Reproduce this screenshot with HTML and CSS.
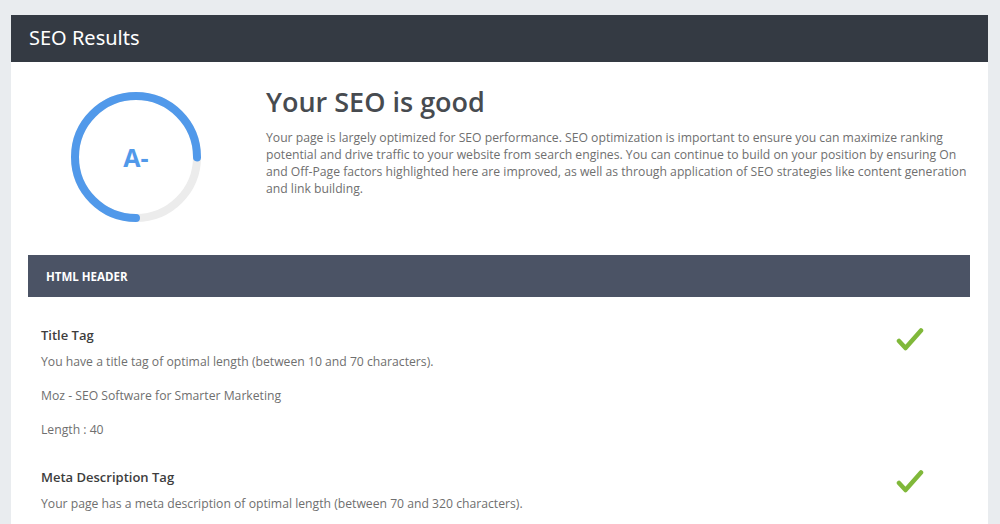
FILE: index.html
```html
<!DOCTYPE html>
<html>
<head>
<meta charset="utf-8">
<link rel="stylesheet" href="styles.css">
</head>
<body>
<div class="card">
  <div class="card-header">SEO Results</div>
  <div class="card-body">
    <div class="hero">
      <div class="gauge">
        <svg width="130" height="130" viewBox="0 0 130 130">
          <circle cx="65" cy="65" r="61" fill="none" stroke="#ececec" stroke-width="8"/>
          <circle cx="65" cy="65" r="61" fill="none" stroke="#5199ea" stroke-width="8" stroke-linecap="round"
            stroke-dasharray="287.4 383.3" transform="rotate(90 65 65)"/>
        </svg>
        <span class="grade">A-</span>
      </div>
      <div class="hero-text">
        <h1 class="hero-title">Your SEO is good</h1>
        <p class="hero-desc">Your page is largely optimized for SEO performance. SEO optimization is important to ensure you can maximize ranking potential and drive traffic to your website from search engines. You can continue to build on your position by ensuring On and Off-Page factors highlighted here are improved, as well as through application of SEO strategies like content generation and link building.</p>
      </div>
    </div>
    <div class="section-bar">HTML HEADER</div>
    <div class="item">
      <div class="item-content">
        <h3 class="item-title">Title Tag</h3>
        <p class="item-text">You have a title tag of optimal length (between 10 and 70 characters).</p>
        <p class="item-text">Moz - SEO Software for Smarter Marketing</p>
        <p class="item-text">Length : 40</p>
      </div>
      <svg class="check" width="28" height="26" viewBox="0 0 28 26"><polyline points="3,14 9.5,21 25,3.5" fill="none" stroke="#80b83a" stroke-width="4.5" stroke-linecap="round" stroke-linejoin="round"/></svg>
    </div>
    <div class="item">
      <div class="item-content">
        <h3 class="item-title">Meta Description Tag</h3>
        <p class="item-text">Your page has a meta description of optimal length (between 70 and 320 characters).</p>
      </div>
      <svg class="check" width="28" height="26" viewBox="0 0 28 26"><polyline points="3,14 9.5,21 25,3.5" fill="none" stroke="#80b83a" stroke-width="4.5" stroke-linecap="round" stroke-linejoin="round"/></svg>
    </div>
  </div>
</div>
</body>
</html>
```
FILE: styles.css
```css
html, body {
  margin: 0;
  padding: 0;
}
body {
  background: #e9ecef;
  font-family: "Open Sans", "Noto Sans", sans-serif;
  padding: 15px 12px 0 11px;
  overflow: hidden;
}
.card {
  background: #fff;
  width: 977px;
}
.card-header {
  background: #343a43;
  color: #fff;
  height: 47px;
  line-height: 46px;
  padding-left: 18px;
  font-size: 20px;
  font-family: "Noto Sans", sans-serif;
}
.card-body {
  padding: 0 18px 40px 17px;
}
.hero {
  display: flex;
  padding-top: 30px;
  height: 163px;
}
.gauge {
  position: relative;
  width: 130px;
  height: 130px;
  margin-left: 43px;
  flex: none;
}
.gauge svg {
  display: block;
}
.grade {
  position: absolute;
  left: 0;
  right: 0;
  top: 50%;
  transform: translateY(-50%);
  text-align: center;
  color: #5199ea;
  font-weight: 700;
  font-size: 25px;
  font-family: "Open Sans", sans-serif;
}
.hero-text {
  margin-left: 65px;
  flex: 1;
}
.hero-title {
  margin: -10px 0 0;
  font-size: 27px;
  font-weight: 600;
  color: #474b50;
  line-height: 40px;
}
.hero-desc {
  margin: 7px 0 0;
  font-size: 12.2px;
  line-height: 17px;
  color: #6f6f6f;
}
.section-bar {
  background: #4b5365;
  color: #fff;
  height: 42px;
  line-height: 43px;
  padding-left: 18px;
  font-size: 11.5px;
  font-weight: 700;
}
.item {
  display: flex;
  align-items: flex-start;
  padding: 30px 13px 1px 13px;
}
.item-content {
  flex: 1;
}
.item-title {
  margin: 0 0 9px;
  font-size: 13px;
  line-height: 17px;
  font-weight: 600;
  color: #3d3d3d;
}
.item-text {
  margin: 0 0 17px;
  font-size: 12.2px;
  line-height: 17px;
  color: #6f6f6f;
}
.item-text:last-child {
  margin-bottom: 0;
}
.check {
  margin: 0 33px 0 0;
  flex: none;
}
```
